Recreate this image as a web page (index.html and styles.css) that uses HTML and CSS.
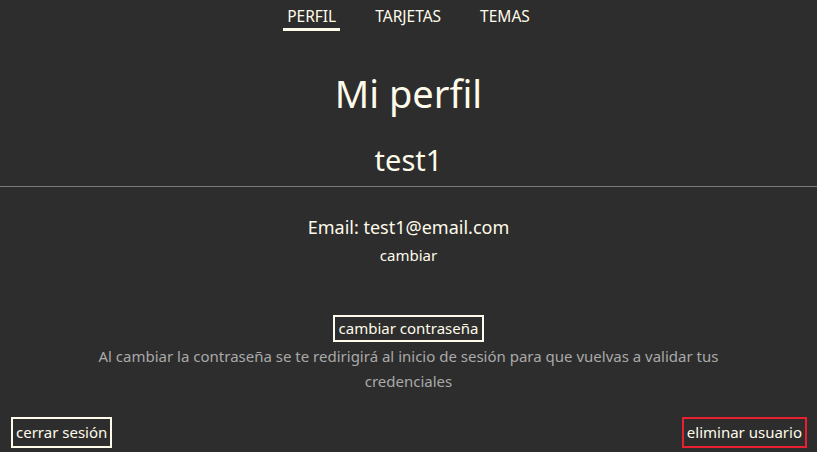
FILE: index.html
```html
<!DOCTYPE html>
<html lang="es">
<head>
<meta charset="utf-8">
<title>Mi perfil</title>
<link rel="stylesheet" href="styles.css">
</head>
<body>
<nav class="nav">
  <a class="nav-item active">PERFIL</a>
  <a class="nav-item">TARJETAS</a>
  <a class="nav-item">TEMAS</a>
</nav>
<main class="profile">
  <h1 class="title">Mi perfil</h1>
  <h2 class="username">test1</h2>
  <hr class="divider">
  <p class="email">Email: test1@email.com</p>
  <a class="link">cambiar</a>
  <div class="password">
    <button class="btn">cambiar contraseña</button>
    <p class="note">Al cambiar la contraseña se te redirigirá al inicio de sesión para que vuelvas a validar tus credenciales</p>
  </div>
  <div class="actions">
    <button class="btn tall">cerrar sesión</button>
    <button class="btn tall danger">eliminar usuario</button>
  </div>
</main>
</body>
</html>
```
FILE: styles.css
```css
html, body {
  margin: 0;
  padding: 0;
  background: #2d2d2d;
  color: #fffbea;
  font-family: "Noto Sans", "Open Sans", sans-serif;
  height: 452px;
  overflow: hidden;
}
.nav {
  display: flex;
  justify-content: center;
  gap: 31px;
  padding-top: 7px;
}
.nav-item {
  font-size: 15.5px;
  line-height: 19px;
  padding: 0 4px 2px;
  border-bottom: 3px solid transparent;
}
.nav-item.active {
  border-bottom-color: #fffbea;
}
.profile {
  display: flex;
  flex-direction: column;
  align-items: center;
  text-align: center;
}
.title {
  font-weight: 400;
  font-size: 38px;
  line-height: 52px;
  margin: 36px 0 0;
}
.username {
  font-weight: 400;
  font-size: 29px;
  line-height: 40px;
  margin: 21px 0 0;
}
.divider {
  align-self: stretch;
  border: 0;
  border-top: 1px solid #7a7a7a;
  margin: 6px 0 0;
}
.email {
  font-size: 18px;
  line-height: 24px;
  margin: 28px 0 0;
}
.link {
  font-size: 15px;
  line-height: 20px;
  margin-top: 6px;
}
.password {
  display: flex;
  flex-direction: column;
  align-items: center;
  margin-top: 50px;
}
.btn {
  font-family: inherit;
  font-size: 15px;
  line-height: 23px;
  color: #fffbea;
  background: transparent;
  border: 2px solid #fffbea;
  padding: 0 4px;
  margin: 0;
}
.btn.tall {
  line-height: 21px;
  padding: 3px 3px;
}
.note {
  color: #a9a9a9;
  font-size: 15px;
  line-height: 25px;
  margin: 2px 0 0;
  max-width: 640px;
}
.actions {
  align-self: stretch;
  display: flex;
  justify-content: space-between;
  padding: 23px 10px 0 11px;
}
.btn.danger {
  border-color: #e8202f;
}
```
